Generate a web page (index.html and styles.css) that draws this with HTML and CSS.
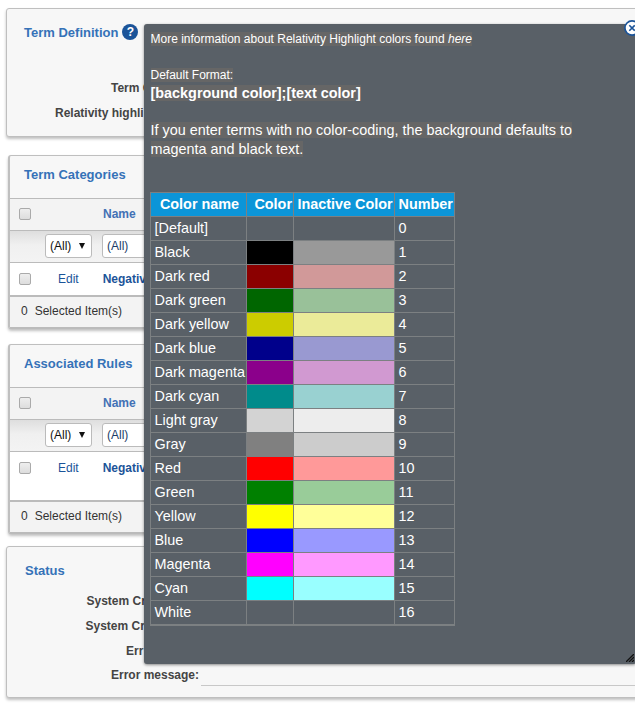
FILE: index.html
```html
<!DOCTYPE html>
<html lang="en">
<head>
<meta charset="utf-8">
<title>Term Definition</title>
<link rel="stylesheet" href="styles.css">
</head>
<body>
<main class="page">
  <section class="panel panel-term">
    <h2><span class="title">Term Definition</span> <span class="help">?</span></h2>
    <div class="fields"><div class="label cut-term">Term C</div><div class="label cut-highlight">Relativity highli</div></div>
  </section>

  <section class="panel list">
    <h2>Term Categories</h2>
    <div class="row head"><span class="check"></span><b class="name">Name</b></div>
    <div class="row filter"><span class="select"><span>(All)</span><i class="arrow"></i></span><span class="input">(All)</span></div>
    <div class="row item"><span class="check"></span><span class="edit">Edit</span><b class="term">Negativ</b></div>
    <div class="foot"><span>0</span><span>Selected Item(s)</span></div>
  </section>

  <section class="panel list list-rules">
    <h2>Associated Rules</h2>
    <div class="row head"><span class="check"></span><b class="name">Name</b></div>
    <div class="row filter"><span class="select"><span>(All)</span><i class="arrow"></i></span><span class="input">(All)</span></div>
    <div class="row item"><span class="check"></span><span class="edit">Edit</span><b class="term">Negativ</b></div>
    <div class="foot"><span>0</span><span>Selected Item(s)</span></div>
  </section>

  <section class="panel panel-status">
    <h2>Status</h2>
    <div class="fields">
      <div class="label cut-created">System Cr</div>
      <div class="label cut-created-on">System Cr</div>
      <div class="label cut-error">Err</div>
      <div class="message"><span class="label">Error message:</span><span class="line"></span></div>
    </div>
  </section>

  <aside class="popup">
    <p class="small"><span class="mark">More information about Relativity Highlight colors found <em>here</em></span></p>
    <p class="small format"><span class="mark">Default Format:</span></p>
    <p class="syntax"><span class="mark">[background color];[text color]</span></p>
    <p class="note"><span class="mark">If you enter terms with no color-coding, the background defaults to<br>magenta and black text.</span></p>
    <table>
      <colgroup><col class="c1"><col class="c2"><col class="c3"><col class="c4"></colgroup>
      <thead><tr><th class="center">Color name</th><th class="right">Color</th><th>Inactive Color</th><th>Number</th></tr></thead>
      <tbody>
        <tr><td>[Default]</td><td></td><td></td><td>0</td></tr>
        <tr><td>Black</td><td class="black"></td><td class="black-off"></td><td>1</td></tr>
        <tr><td>Dark red</td><td class="dred"></td><td class="dred-off"></td><td>2</td></tr>
        <tr><td>Dark green</td><td class="dgreen"></td><td class="dgreen-off"></td><td>3</td></tr>
        <tr><td>Dark yellow</td><td class="dyellow"></td><td class="dyellow-off"></td><td>4</td></tr>
        <tr><td>Dark blue</td><td class="dblue"></td><td class="dblue-off"></td><td>5</td></tr>
        <tr><td>Dark magenta</td><td class="dmagenta"></td><td class="dmagenta-off"></td><td>6</td></tr>
        <tr><td>Dark cyan</td><td class="dcyan"></td><td class="dcyan-off"></td><td>7</td></tr>
        <tr><td>Light gray</td><td class="lgray"></td><td class="lgray-off"></td><td>8</td></tr>
        <tr><td>Gray</td><td class="gray"></td><td class="gray-off"></td><td>9</td></tr>
        <tr><td>Red</td><td class="red"></td><td class="red-off"></td><td>10</td></tr>
        <tr><td>Green</td><td class="green"></td><td class="green-off"></td><td>11</td></tr>
        <tr><td>Yellow</td><td class="yellow"></td><td class="yellow-off"></td><td>12</td></tr>
        <tr><td>Blue</td><td class="blue"></td><td class="blue-off"></td><td>13</td></tr>
        <tr><td>Magenta</td><td class="magenta"></td><td class="magenta-off"></td><td>14</td></tr>
        <tr><td>Cyan</td><td class="cyan"></td><td class="cyan-off"></td><td>15</td></tr>
        <tr class="last"><td>White</td><td></td><td></td><td>16</td></tr>
      </tbody>
    </table>
    <svg class="close" width="16" height="16" viewBox="0 0 16 16"><circle cx="8" cy="8" r="7.1" fill="#fff" stroke="#1b5499" stroke-width="1.7"/><path d="M5.3 5.3l5.4 5.4M10.7 5.3l-5.4 5.4" stroke="#1b5499" stroke-width="1.6"/></svg>
    <svg class="grip" width="8" height="8" viewBox="0 0 8 8"><path d="M0 8L8 0M3 8L8 3M6 8L8 6" stroke="#111" stroke-width="1.3"/></svg>
  </aside>
</main>
</body>
</html>
```
FILE: styles.css
```css
* { box-sizing: border-box; }
body {
  margin: 0;
  background: #fff;
  font: 12px/14px "Liberation Sans", Arial, sans-serif;
  color: #333;
}
.page {
  position: relative;
  width: 635px;
  height: 704px;
  padding: 8px 0 0 6px;
  overflow: hidden;
}
.panel {
  width: 640px;
  background: #f7f7f7;
  border: 1px solid #bfbfbf;
  border-radius: 3px;
  box-shadow: 0 2px 3px rgba(0, 0, 0, .25);
}
h2 {
  margin: 0;
  font-size: 13px;
  line-height: 16px;
  font-weight: bold;
  color: #3572b8;
}
.panel-term { height: 129px; padding: 15px 0 0 17px; }
.panel-term h2 { display: flex; gap: 4px; height: 16px; }
.title { padding-top: 1px; }
.help {
  width: 16px;
  height: 16px;
  border-radius: 50%;
  background: #1b5499;
  color: #fff;
  font-size: 12px;
  line-height: 16px;
  text-align: center;
}
.label { font-weight: bold; color: #444; white-space: nowrap; }
.panel-term .fields { padding-top: 41px; display: grid; gap: 11px; }
.cut-term { padding-left: 87px; }
.cut-highlight { padding-left: 31px; }

.list { margin: 18px 0 0 2px; height: 174px; border-left-width: 2px; border-bottom: 2px solid #bbb; }
.list h2 { height: 42px; padding: 11px 0 0 14px; }
.row { display: flex; align-items: center; border-top: 1px solid #bbb; }
.head { height: 32px; padding: 0 0 1px 9px; background: #f3f3f3; }
.check {
  flex: none;
  width: 12px;
  height: 12px;
  border: 1px solid #aaa;
  border-radius: 2px;
  background: linear-gradient(#eee, #ddd);
}
.name { margin-left: 72px; color: #4271b5; }
.filter { height: 32px; padding: 0 0 1px 35px; gap: 10px; background: linear-gradient(#dedede, #f0f0f0 45%, #f3f3f3); }
.select, .input {
  display: flex;
  align-items: center;
  height: 24px;
  border: 1px solid #bbb;
  border-radius: 3px;
  background: #fff;
  padding: 0 6px 0 4px;
}
.select { width: 47px; justify-content: space-between; color: #111; }
.arrow { border: 3.5px solid transparent; border-top: 6px solid #111; border-bottom: 0; }
.input { width: 150px; color: #1b3c68; }
.item { height: 33px; padding-left: 9px; background: #fff; }
.edit { margin-left: 27px; color: #1b5499; }
.term { margin-left: 24px; color: #1b5499; }
.foot {
  display: flex;
  gap: 7px;
  align-items: center;
  height: 32px;
  border-top: 2px solid #bbb;
  background: #f3f3f3;
  padding: 0 0 2px 11px;
}
.list-rules { margin-top: 15px; height: 190px; }
.list-rules .item { height: 49px; align-items: flex-start; padding-top: 9px; }
.list-rules .item .check { margin-top: 1px; }

.panel-status { margin-top: 12px; height: 152px; padding: 16px 0 0 18px; }
.panel-status .fields { padding-top: 15px; display: grid; gap: 11px; }
.cut-created { padding-left: 61.5px; }
.cut-created-on { padding-left: 60.5px; }
.cut-error { padding-left: 101px; }
.message { display: flex; padding-left: 86px; gap: 2px; margin-top: -1px; }
.line { flex: 1; height: 18px; border-bottom: 1px solid #c8c8c8; }

.popup {
  position: absolute;
  left: 144px;
  top: 24px;
  width: 492px;
  height: 640px;
  padding: 7px 0 0 6px;
  background: #596067;
  border-radius: 3px;
  box-shadow: 0 1px 3px rgba(0, 0, 0, .45);
  color: #fff;
}
p { margin: 0; padding-left: .5px; white-space: nowrap; }
.mark { background: #666; }
.small { line-height: 16px; }
.format { margin-top: 20px; }
.syntax { font-size: 14.4px; line-height: 21px; font-weight: bold; }
.note { margin-top: 17px; font-size: 14.4px; line-height: 19px; }
table {
  width: 304px;
  margin-top: 33px;
  border-collapse: collapse;
  table-layout: fixed;
  font-size: 14.4px;
  line-height: 17px;
  white-space: nowrap;
}
.c1 { width: 96px; }
.c2 { width: 47px; }
.c3 { width: 101px; }
.c4 { width: 60px; }
td, th { height: 24px; padding: 0 0 1px 3.5px; border: 1px solid #7c8082; text-align: left; }
.last td { padding-bottom: 0; border-bottom: 2px solid #7c8082; }
th { background: #0c95d8; }
th.center { padding-left: 2px; text-align: center; }
th.right { padding-right: 1px; text-align: right; }
.black { background: #000; } .black-off { background: #999; }
.dred { background: #8b0000; } .dred-off { background: #d19999; }
.dgreen { background: #060; } .dgreen-off { background: #99c199; }
.dyellow { background: #cc0; } .dyellow-off { background: #ebeb99; }
.dblue { background: #00008b; } .dblue-off { background: #9999d1; }
.dmagenta { background: #8b008b; } .dmagenta-off { background: #d199d1; }
.dcyan { background: #008b8b; } .dcyan-off { background: #99d1d1; }
.lgray { background: #d3d3d3; } .lgray-off { background: #ededed; }
.gray { background: #808080; } .gray-off { background: #ccc; }
.red { background: #f00; } .red-off { background: #f99; }
.green { background: #008000; } .green-off { background: #9c9; }
.yellow { background: #ff0; } .yellow-off { background: #ff9; }
.blue { background: #00f; } .blue-off { background: #99f; }
.magenta { background: #f0f; } .magenta-off { background: #f9f; }
.cyan { background: #0ff; } .cyan-off { background: #9ff; }
.close { position: absolute; left: 480px; top: -4px; }
.grip { position: absolute; right: 2px; bottom: 2px; }
```
